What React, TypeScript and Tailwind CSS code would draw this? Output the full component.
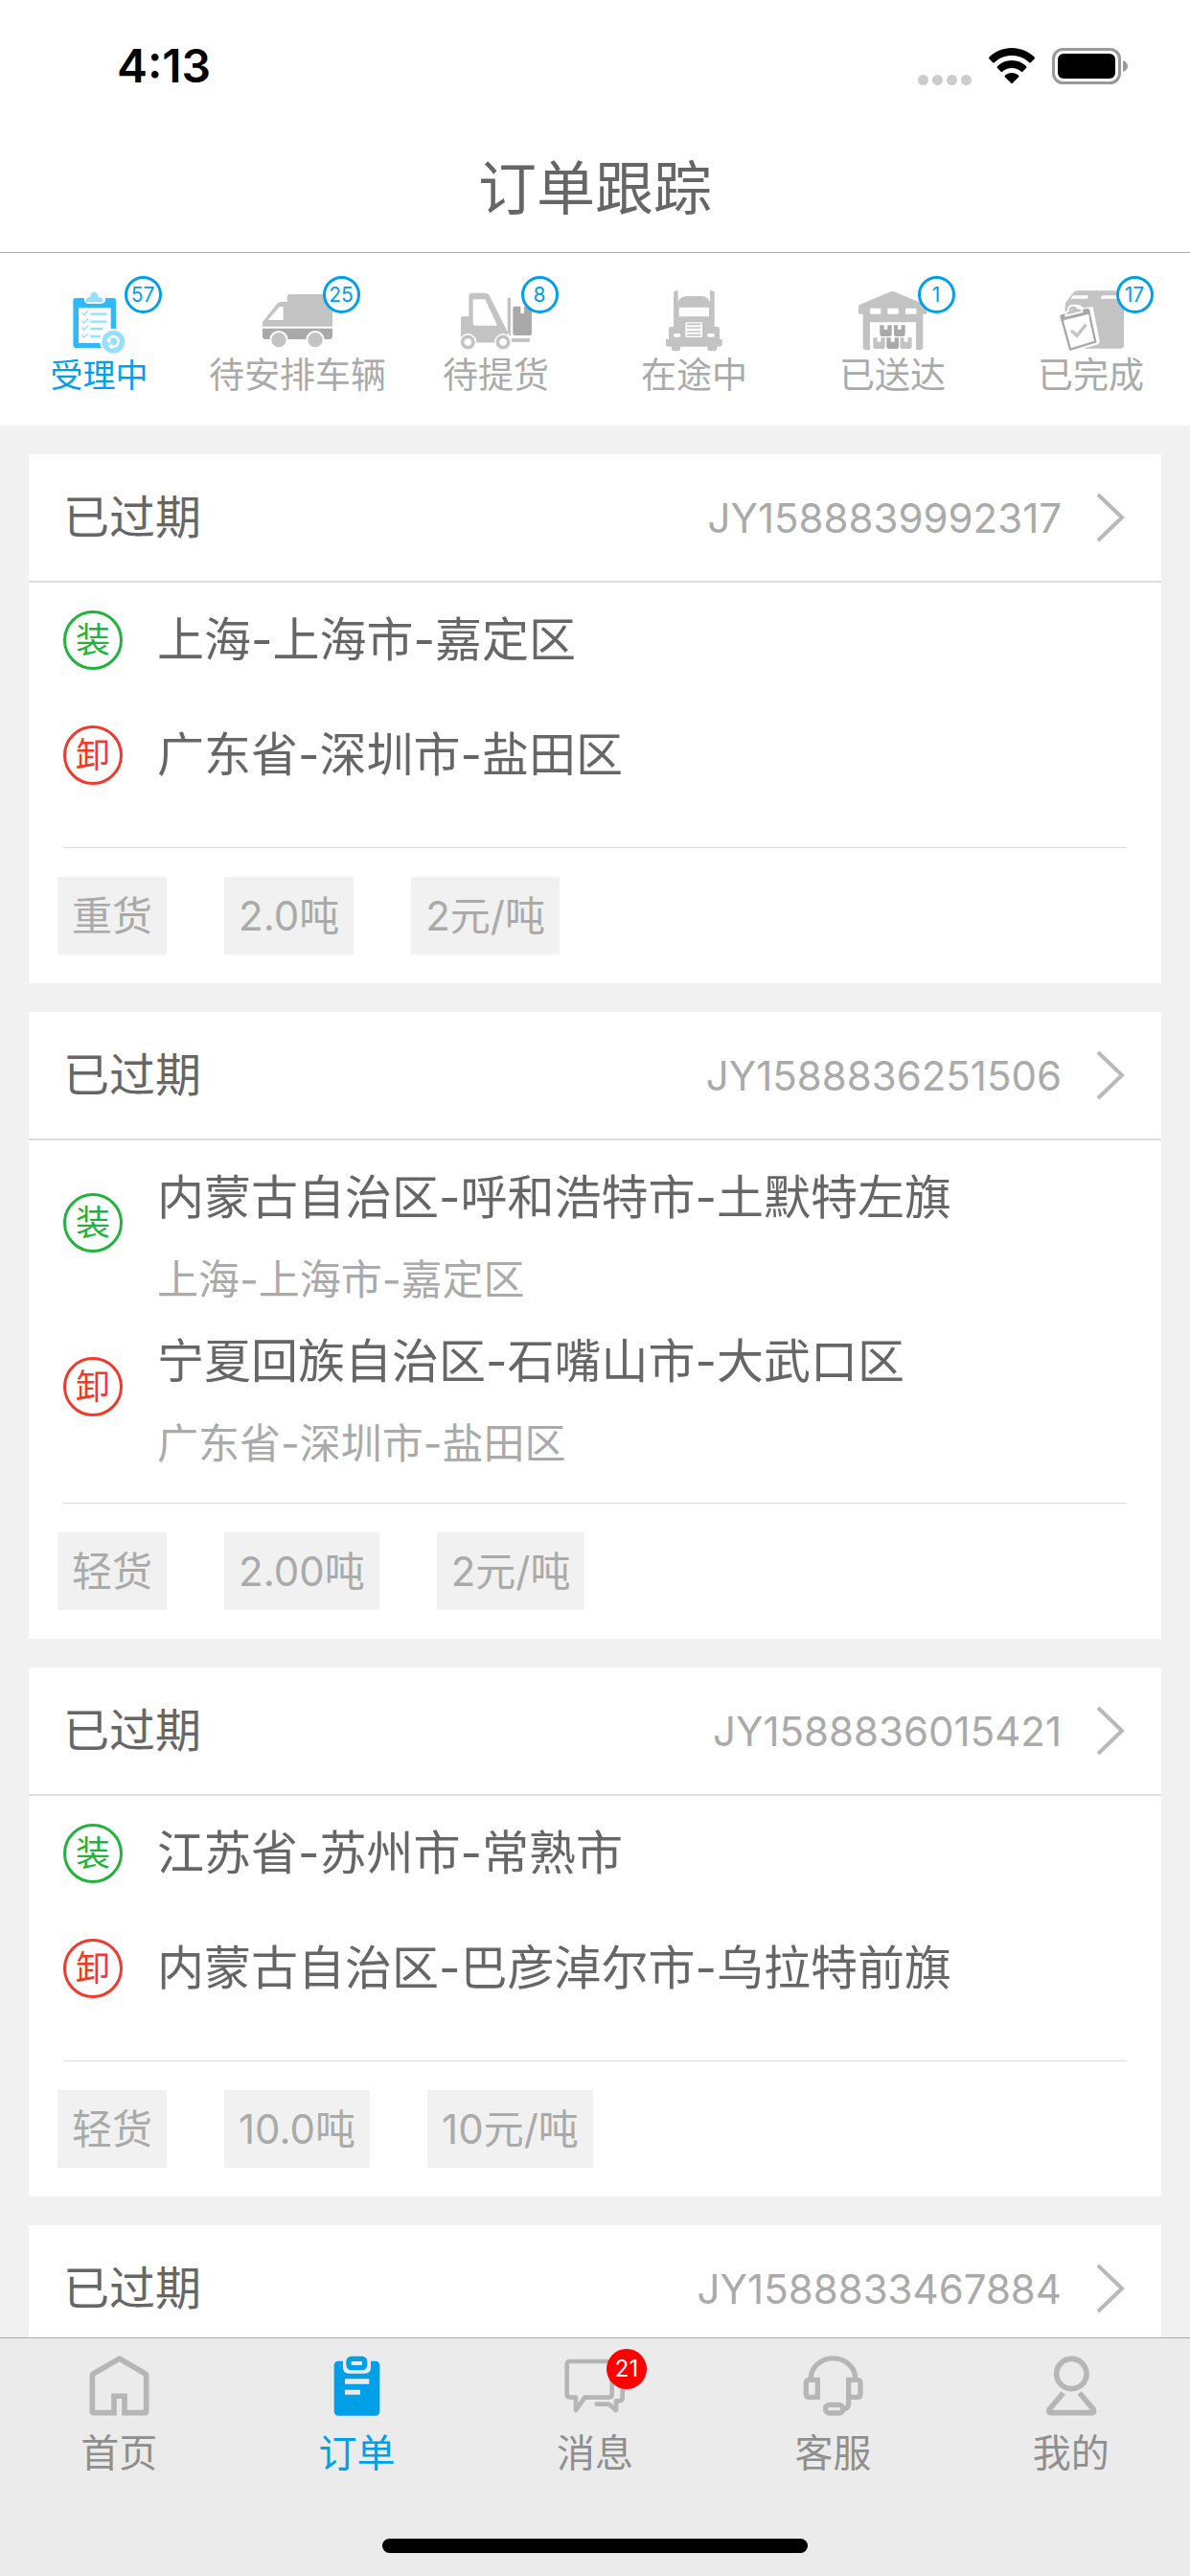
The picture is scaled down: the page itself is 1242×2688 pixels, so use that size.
import React from 'react';

type IconProps = { className?: string };

// Order status icons
function AcceptedIcon({ className }: IconProps) {
  return (
    <svg viewBox="189 120 243 216" className={className} aria-hidden="true">
      <path fill="#2fb9fb" fillRule="evenodd" d="M237 153h118a8 8 0 0 1 8 8v140a8 8 0 0 1-8 8H237a8 8 0 0 1-8-8V161a8 8 0 0 1 8-8zM246 184v110h101V184z" />
      <path fill="#fff" d="M264 150h66v9c0 8-8 12-15 12h-38c-8 0-13-5-13-12z" />
      <path fill="#97dfff" d="M269 166c-2-11 5-16 14-17 0-8 4-15 12-15s12 7 12 15c9 1 18 6 16 17z" />
      <g fill="none" stroke="#97dfff" strokeWidth="7" strokeLinecap="round">
        <path d="M286 203h46M286 227h46M286 249h33M286 273h26" />
        <path strokeWidth="4" d="M257 199l6 7 12-12M257 224l6 7 12-12M257 246l6 7 12-12M257 270l6 7 12-12" />
      </g>
      <circle cx="355" cy="290" r="42" fill="#fff" />
      <circle cx="355" cy="290" r="36" fill="#97dfff" />
      <path fill="none" stroke="#fff" strokeWidth="7" d="M339 288a16 16 0 1 1 15 17h-12" />
      <path fill="#fff" d="M352 296v17l-15-9zM333 283l14 0 -4 13z" />
    </svg>
  );
}

function VanIcon({ className }: IconProps) {
  return (
    <svg viewBox="810 120 243 216" className={className} aria-hidden="true">
      <path fill="#c3c3c3" fillRule="evenodd" d="M822 242v-14l45-56q6-7 14-7h18v-14q0-10 10-10h122q10 0 10 10v91zM841 222h46v-42h-8q-4 0-7 4l-30 34q-3 3-1 4z" />
      <path fill="#a9a9a9" d="M822 248h219v25q0 9-9 9H831q-9 0-9-9z" />
      <g fill="#c3c3c3" stroke="#fff" strokeWidth="6">
        <circle cx="873" cy="284" r="26" />
        <circle cx="987" cy="284" r="26" />
      </g>
    </svg>
  );
}

function ForkliftIcon({ className }: IconProps) {
  return (
    <svg viewBox="171 120 243 216" className={className} aria-hidden="true">
      <path fill="#c3c3c3" fillRule="evenodd" d="M183 290v-72q0-8 8-8h17v-62q0-11 11-11h40q9 0 14 9l57 115v32H183zM221 157v76q0 6 6 6h66q4 0 2-5l-36-77z" />
      <path fill="#c3c3c3" d="M329 152h10v122l-10-14zM342 279h57v12h-57z" />
      <path fill="#a9a9a9" d="M346 185q0-6 6-6h18v22h11v-22h24v85q0 6-6 6h-47q-6 0-6-6z" />
      <path fill="#fff" d="M230 293h60v16h-60z" />
      <g fill="#fff">
        <circle cx="205" cy="291" r="27" />
        <circle cx="315" cy="291" r="27" />
      </g>
      <g fill="#fff" stroke="#c3c3c3" strokeWidth="11">
        <circle cx="205" cy="291" r="17" />
        <circle cx="315" cy="291" r="17" />
      </g>
    </svg>
  );
}

function TruckFrontIcon({ className }: IconProps) {
  return (
    <svg viewBox="792 120 243 216" className={className} aria-hidden="true">
      <path fill="#c3c3c3" fillRule="evenodd" d="M849 133l14-5v39q6-20 26-20h48q20 0 26 20v-39l14 5v110h6q10 0 10 10v29h8v15q0 8-8 8h-8v5q0 9-9 9h-12q-9 0-9-9v-5h-85v5q0 9-9 9h-10q-8 0-8-9v-5h-10q-8 0-8-8v-15h9v-29q0-10 10-10h5zM866 182v29h94v-29z" />
      <rect x="886" y="229" width="53" height="47" rx="4" fill="#fff" />
      <path stroke="#c3c3c3" strokeWidth="5" d="M891 235h43M891 246h43M891 258h43M891 269h43" />
      <rect x="848" y="264" width="23" height="11" rx="5" fill="#fff" />
      <rect x="954" y="264" width="23" height="11" rx="5" fill="#fff" />
    </svg>
  );
}

function WarehouseIcon({ className }: IconProps) {
  return (
    <svg viewBox="153 120 243 216" className={className} aria-hidden="true">
      <path fill="#c3c3c3" fillRule="evenodd" d="M168 180q0-5 5-7l96-40q5-2 10 0l97 40q5 2 5 7v23h-11v102q0 10-10 10h-12v-86H204v86h-11q-11 0-11-10V203h-14zM204 185v18h34v-18zM259 185v18h34v-18zM315 185v18h34v-18z" />
      <path fill="#a9a9a9" d="M235 238h13v13h11v-13h13v28q0 7-7 7h-23q-7 0-7-7zM279 238h12v13h11v-13h12v28q0 7-7 7h-21q-7 0-7-7zM256 277h13v13h12v-13h13v28q0 7-7 7h-24q-7 0-7-7z" />
      <path fill="#c3c3c3" d="M214 277h13v13h11v-13h13v28q0 7-7 7h-23q-7 0-7-7zM298 277h13v13h11v-13h13v28q0 7-7 7h-23q-7 0-7-7z" />
    </svg>
  );
}

function CompletedIcon({ className }: IconProps) {
  return (
    <svg viewBox="774 120 243 216" className={className} aria-hidden="true">
      <path fill="#c3c3c3" d="M815 176q0-8 5-14l22-27q4-5 11-5h115q7 0 11 5l15 27q5 8 5 16v123q0 10-10 10H827q-12 0-12-12z" />
      <path fill="#fff" d="M840 145h49l-5 10h-52zM932 145h42l5 10h-54z" />
      <path fill="#fff" d="M794 208l34-15q4-20 22-20 14 0 22 10l30-2 21 107q0 8-9 11l-93 26q-6 0-9-8z" />
      <path fill="#fff" stroke="#a9a9a9" strokeWidth="7" strokeLinejoin="round" d="M803 212l85-21 22 99-79 24z" />
      <path fill="#a9a9a9" d="M800 213q-2-7 5-9l76-18q8-2 10 6l3 12-91 22z" />
      <path fill="#fff" d="M813 222l74-18 5 8-76 19z" />
      <path fill="#c3c3c3" stroke="#fff" strokeWidth="5" d="M817 209q-1-12 8-16 0-16 14-17 12 0 16 9 12-2 14 11z" />
      <path fill="none" stroke="#c3c3c3" strokeWidth="10" strokeLinecap="round" d="M837 257l15 14 26-32" />
    </svg>
  );
}

// Bottom navigation icons
function HomeIcon({ className }: IconProps) {
  return (
    <svg viewBox="279 115 189 189" className={className} aria-hidden="true">
      <path fill="none" stroke="#b6b6b6" strokeWidth="17" d="M357 242v52h-64q-4 0-4-4V177q0-3 3-5l78-45q4-3 8 0l77 45q3 2 3 5v113q0 4-4 4h-64v-52z" />
      <path fill="#ebebeb" d="M366 250h15v54h-15z" />
    </svg>
  );
}

function ClipboardIcon({ className }: IconProps) {
  return (
    <svg viewBox="1023 115 189 189" className={className} aria-hidden="true">
      <rect x="1046" y="132" width="143" height="171" rx="13" fill="#00a0e9" />
      <path fill="#ebebeb" d="M1074 130h87v22q0 19-19 19h-49q-19 0-19-19z" />
      <rect x="1092" y="125" width="50" height="28" rx="8" fill="#ebebeb" stroke="#00a0e9" strokeWidth="16" />
      <path fill="#ebebeb" d="M1080 188h76v16h-76zM1080 222h48v15h-48z" />
    </svg>
  );
}

function ChatIcon({ className }: IconProps) {
  return (
    <svg viewBox="508 115 189 189" className={className} aria-hidden="true">
      <g fill="none" stroke="#b6b6b6" strokeWidth="14" strokeLinejoin="round" strokeLinecap="round">
        <path d="M526 133h121q10 0 10 10v93q0 10-10 10h-75l-28 40v-40h-18q-10 0-10-10v-93q0-10 10-10z" />
        <path d="M690 180v66q0 11-11 11h-9v29l-23-19h-38" />
      </g>
    </svg>
  );
}

function HeadsetIcon({ className }: IconProps) {
  return (
    <svg viewBox="-6 115 189 189" className={className} aria-hidden="true">
      <g fill="none" stroke="#b6b6b6" strokeWidth="16">
        <path d="M19 191v-5a69 62 0 0 1 139 0v5" />
        <path d="M40 191v54H14q-10 0-10-10v-34q0-10 10-10zM137 191v54h27q10 0 10-10v-34q0-10-10-10z" />
        <path d="M137 240v25q0 16-17 18" />
        <rect x="65" y="269" width="54" height="26" rx="12" />
      </g>
    </svg>
  );
}

function UserIcon({ className }: IconProps) {
  return (
    <svg viewBox="739 115 189 189" className={className} aria-hidden="true">
      <g fill="none" stroke="#b6b6b6" strokeWidth="17" strokeLinejoin="round">
        <circle cx="836" cy="172" r="47" />
        <path d="M810 232l-44 52q-4 10 6 10h127q10 0 6-10l-44-52" />
      </g>
    </svg>
  );
}

const statusTabs = [
  { label: '受理中', count: 57, icon: AcceptedIcon, active: true },
  { label: '待安排车辆', count: 25, icon: VanIcon },
  { label: '待提货', count: 8, icon: ForkliftIcon },
  { label: '在途中', count: 0, icon: TruckFrontIcon },
  { label: '已送达', count: 1, icon: WarehouseIcon },
  { label: '已完成', count: 17, icon: CompletedIcon }
];

const navItems = [
  { label: '首页', icon: HomeIcon },
  { label: '订单', icon: ClipboardIcon, active: true },
  { label: '消息', icon: ChatIcon, count: 21 },
  { label: '客服', icon: HeadsetIcon },
  { label: '我的', icon: UserIcon }
];

type Stop = { name: string; detail?: string };

type Order = {
  id: string;
  status: string;
  from?: Stop;
  to?: Stop;
  tags?: string[];
};

const orders: Order[] = [
  {
    id: 'JY1588839992317',
    status: '已过期',
    from: { name: '上海-上海市-嘉定区' },
    to: { name: '广东省-深圳市-盐田区' },
    tags: ['重货', '2.0吨', '2元/吨']
  },
  {
    id: 'JY1588836251506',
    status: '已过期',
    from: { name: '内蒙古自治区-呼和浩特市-土默特左旗', detail: '上海-上海市-嘉定区' },
    to: { name: '宁夏回族自治区-石嘴山市-大武口区', detail: '广东省-深圳市-盐田区' },
    tags: ['轻货', '2.00吨', '2元/吨']
  },
  {
    id: 'JY1588836015421',
    status: '已过期',
    from: { name: '江苏省-苏州市-常熟市' },
    to: { name: '内蒙古自治区-巴彦淖尔市-乌拉特前旗' },
    tags: ['轻货', '10.0吨', '10元/吨']
  },
  {
    id: 'JY1588833467884',
    status: '已过期'
  }
];

function StatusBar() {
  return (
    <div className="flex h-[132px] items-center justify-between pt-1.5 pr-16 pl-[122px]">
      <span className="text-5xl font-semibold text-black">4:13</span>
      <div className="flex items-center">
        <div className="mt-7 mr-[18px] flex gap-1">
          {[0, 1, 2, 3].map(dot => (
            <span key={dot} className="size-[11px] rounded-full bg-[#cccccc]" />
          ))}
        </div>
        <svg viewBox="0 0 48 38" className="mr-[18px] h-[38px] w-12" aria-hidden="true">
          <path d="M24 0c9 0 17 3.500 23.500 9.500q1 1 0 2l-3.500 3.500q-1 1-2 0C37 10.500 31 8 24 8S11 10.500 6 15q-1 1-2 0L.5 11.500q-1-1 0-2C7 3.500 15 0 24 0z" />
          <path d="M24 13c6 0 11 2 15 6q1 1 0 2l-3.500 3.500q-1 1-2 0c-2.500-2.300-5.500-3.500-9.500-3.500s-7 1.200-9.500 3.500q-1 1-2 0L9 21q-1-1 0-2c4-4 9-6 15-6z" />
          <path d="M24 26c2.500 0 5 1 7 2.500q1 1 0 2l-6 6q-1 1-2 0l-6-6q-1-1 0-2c2-1.500 4.500-2.500 7-2.500z" />
        </svg>
        <svg viewBox="0 0 80 38" className="h-[38px] w-20" aria-hidden="true">
          <rect x="1.500" y="1.500" width="69" height="35" rx="10" fill="none" stroke="#999999" strokeWidth="3" />
          <rect x="6" y="6" width="60" height="26" rx="6" />
          <path fill="#999999" d="M74 13q5 2 5 6t-5 6z" />
        </svg>
      </div>
    </div>
  );
}

function StopRow({ stop, mark, color }: { stop: Stop; mark: string; color: string }) {
  return (
    <div className={`flex items-center ${stop.detail ? 'h-[171px]' : 'h-[120px]'}`}>
      <span className={`flex size-[62px] shrink-0 items-center justify-center rounded-full border-3 text-4xl ${color}`}>
        {mark}
      </span>
      <div className={`ml-9 flex flex-col gap-[30px] ${stop.detail ? 'pt-7' : ''}`}>
        <p className="text-[49px] leading-[60px] text-[#666666]">{stop.name}</p>
        {stop.detail && <p className="text-[43px] leading-[50px] text-[#aaaaaa]">{stop.detail}</p>}
      </div>
    </div>
  );
}

function OrderCard({ order }: { order: Order }) {
  return (
    <article className="shrink-0 bg-white">
      <a href="#order" className="flex h-[134px] items-center border-b-2 border-[#dddddd] px-9">
        <h2 className="text-5xl text-[#666666]">{order.status}</h2>
        <span className="ml-auto text-[42px] text-[#aaaaaa]">{order.id}</span>
        <svg viewBox="0 0 32 52" className="ml-9 h-[52px] w-8" fill="none" stroke="#b9b9b9" strokeWidth="4" aria-hidden="true">
          <path d="M2 2l25 24L2 50" />
        </svg>
      </a>
      {order.from && order.to && (
        <div className="mx-9 border-b border-[#dddddd] pb-9">
          <StopRow stop={order.from} mark="装" color="border-[#22b33c] text-[#22b33c]" />
          <StopRow stop={order.to} mark="卸" color="border-[#f03a2b] text-[#f03a2b]" />
        </div>
      )}
      {order.tags && (
        <ul className="flex gap-15 p-[30px]">
          {order.tags.map(tag => (
            <li key={tag} className="flex h-[81px] items-center bg-[#f1f1f1] px-[15px] text-[42px] text-[#aaaaaa]">
              {tag}
            </li>
          ))}
        </ul>
      )}
    </article>
  );
}

export default function App() {
  return (
    <div className="flex h-screen flex-col overflow-hidden bg-[#f1f1f1] font-['Inter','Noto_Sans_CJK_SC',sans-serif]">
      {/* Header */}
      <header className="shrink-0 border-b border-[#aaaaaa] bg-white">
        <StatusBar />
        <h1 className="flex h-[131px] items-center justify-center text-[61px] text-[#666666]">订单跟踪</h1>
      </header>

      {/* Order status tabs */}
      <nav className="grid shrink-0 grid-cols-6 bg-white">
        {statusTabs.map(tab => {
          const Icon = tab.icon;
          return (
            <button key={tab.label} type="button" className="relative flex h-[180px] flex-col items-center pt-9">
              <Icon className="h-[72px] w-[81px] shrink-0" />
              <span className={`leading-10 whitespace-nowrap ${tab.active ? 'text-[34px] text-[#00a0e9]' : 'text-[37px] text-[#aaaaaa]'}`}>
                {tab.label}
              </span>
              {tab.count > 0 && (
                <span className="absolute top-6 left-1/2 ml-[26px] flex size-[39px] items-center justify-center rounded-full border-3 border-[#00a0e9] bg-white text-[21px] text-[#00a0e9]">
                  {tab.count}
                </span>
              )}
            </button>
          );
        })}
      </nav>

      {/* Orders */}
      <main className="flex min-h-0 flex-1 flex-col gap-[30px] overflow-hidden px-[30px] pt-[30px]">
        {orders.map(order => (
          <OrderCard key={order.id} order={order} />
        ))}
      </main>

      {/* Bottom navigation */}
      <footer className="shrink-0 border-t border-[#aaaaaa] bg-[#ebebeb]">
        <nav className="grid grid-cols-5">
          {navItems.map(item => {
            const Icon = item.icon;
            return (
              <a key={item.label} href="#nav" className="relative flex flex-col items-center pt-[18px]">
                <Icon className="size-[63px]" />
                <span className={`mt-3 text-[40px] leading-[54px] ${item.active ? 'text-[#00a0e9]' : 'text-[#8f8f8f]'}`}>
                  {item.label}
                </span>
                {item.count && (
                  <span className="absolute top-[11px] left-1/2 ml-3 flex size-[42px] items-center justify-center rounded-full bg-[#ff0000] text-2xl text-white">
                    {item.count}
                  </span>
                )}
              </a>
            );
          })}
        </nav>
        <div className="mx-auto mt-[62px] mb-6 h-[15px] w-[444px] rounded-full bg-black" />
      </footer>
    </div>
  );
}
